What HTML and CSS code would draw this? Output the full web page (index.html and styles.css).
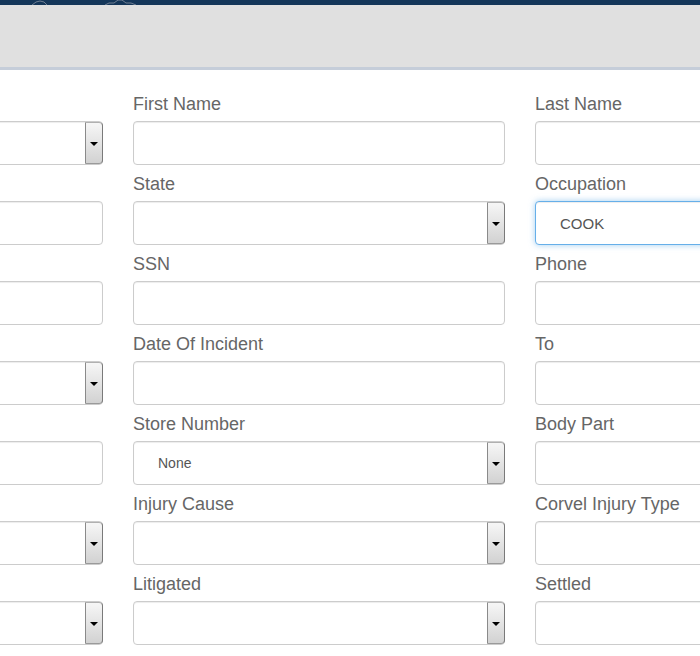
FILE: index.html
```html
<!DOCTYPE html>
<html>
<head>
<meta charset="utf-8">
<link rel="stylesheet" href="styles.css">
</head>
<body>
<header class="header">
  <div class="topbar">
    <svg class="topbar-deco" width="700" height="5" viewBox="0 0 700 5">
      <polyline points="32,5 36,2 40,1 44,2 47,5" fill="none" stroke="#6f7f93" stroke-width="1"/>
      <polyline points="105,5 109,3 114,3 118,0 122,0 126,3 131,3 136,5" fill="none" stroke="#6f7f93" stroke-width="1"/>
    </svg>
  </div>
  <div class="subbar"></div>
</header>

<main class="form">
  <div class="col">
    <div class="field"><label class="lbl">&nbsp;</label><div class="select"><span class="val"></span><span class="btn"><i class="arrow"></i></span></div></div>
    <div class="field"><label class="lbl">&nbsp;</label><div class="input"></div></div>
    <div class="field"><label class="lbl">&nbsp;</label><div class="input"></div></div>
    <div class="field"><label class="lbl">&nbsp;</label><div class="select"><span class="val"></span><span class="btn"><i class="arrow"></i></span></div></div>
    <div class="field"><label class="lbl">&nbsp;</label><div class="input"></div></div>
    <div class="field"><label class="lbl">&nbsp;</label><div class="select"><span class="val"></span><span class="btn"><i class="arrow"></i></span></div></div>
    <div class="field"><label class="lbl">&nbsp;</label><div class="select"><span class="val"></span><span class="btn"><i class="arrow"></i></span></div></div>
  </div>

  <div class="col">
    <div class="field"><label class="lbl">First Name</label><div class="input"></div></div>
    <div class="field"><label class="lbl">State</label><div class="select"><span class="val"></span><span class="btn"><i class="arrow"></i></span></div></div>
    <div class="field"><label class="lbl">SSN</label><div class="input"></div></div>
    <div class="field"><label class="lbl">Date Of Incident</label><div class="input"></div></div>
    <div class="field"><label class="lbl">Store Number</label><div class="select"><span class="val">None</span><span class="btn"><i class="arrow"></i></span></div></div>
    <div class="field"><label class="lbl">Injury Cause</label><div class="select"><span class="val"></span><span class="btn"><i class="arrow"></i></span></div></div>
    <div class="field"><label class="lbl">Litigated</label><div class="select"><span class="val"></span><span class="btn"><i class="arrow"></i></span></div></div>
  </div>

  <div class="col">
    <div class="field"><label class="lbl">Last Name</label><div class="input"></div></div>
    <div class="field"><label class="lbl">Occupation</label><div class="input focused"><span class="val">COOK</span></div></div>
    <div class="field"><label class="lbl">Phone</label><div class="input"></div></div>
    <div class="field"><label class="lbl">To</label><div class="input"></div></div>
    <div class="field"><label class="lbl">Body Part</label><div class="input"></div></div>
    <div class="field"><label class="lbl">Corvel Injury Type</label><div class="input"></div></div>
    <div class="field"><label class="lbl">Settled</label><div class="input"></div></div>
  </div>
</main>
</body>
</html>
```

FILE: styles.css
```css
html, body {
  margin: 0;
  padding: 0;
  overflow: hidden;
  background: #ffffff;
  font-family: "Liberation Sans", Arial, sans-serif;
}

.header {
  display: flex;
  flex-direction: column;
}

.topbar {
  height: 5px;
  background: #143659;
  overflow: hidden;
}

.topbar-deco {
  display: block;
}

.subbar {
  height: 62px;
  background: #e0e0e0;
  border-bottom: 3px solid #c5cdd9;
}

.form {
  display: grid;
  grid-template-columns: repeat(3, 372px);
  column-gap: 30px;
  margin-left: -269px;
  padding-top: 24px;
  width: max-content;
}

.col {
  display: flex;
  flex-direction: column;
}

.field {
  display: flex;
  flex-direction: column;
  margin-bottom: 9px;
}

.lbl {
  display: block;
  font-size: 18px;
  line-height: 20px;
  color: #666666;
  margin-bottom: 7px;
  white-space: nowrap;
}

.input,
.select {
  box-sizing: border-box;
  height: 44px;
  border: 1px solid #cccccc;
  border-radius: 4px;
  background: #ffffff;
  box-shadow: inset 0 1px 1px rgba(0, 0, 0, 0.075);
  display: flex;
  align-items: center;
}

.input.focused {
  border-color: #66afe9;
  box-shadow: inset 0 1px 1px rgba(0, 0, 0, 0.075), 0 0 6px rgba(102, 175, 233, 0.6);
}

.val {
  flex: 1;
  padding-left: 24px;
  font-size: 14px;
  color: #555555;
}

.input .val {
  font-size: 15px;
}

.select .btn {
  box-sizing: border-box;
  width: 18px;
  height: 42px;
  margin-right: -1px;
  border-left: 1px solid #8a8a8a;
  border-right: 1px solid #7a7a7a;
  border-top: 1px solid #b0b0b0;
  border-bottom: 1px solid #9a9a9a;
  border-radius: 0 4px 4px 0;
  background: linear-gradient(#f6f6f6, #e6e6e6 45%, #d2d2d2);
  display: flex;
  align-items: center;
  justify-content: center;
}

.arrow {
  display: block;
  width: 0;
  height: 0;
  margin-top: 2px;
  border-left: 4px solid transparent;
  border-right: 4px solid transparent;
  border-top: 4px solid #000000;
}
```
